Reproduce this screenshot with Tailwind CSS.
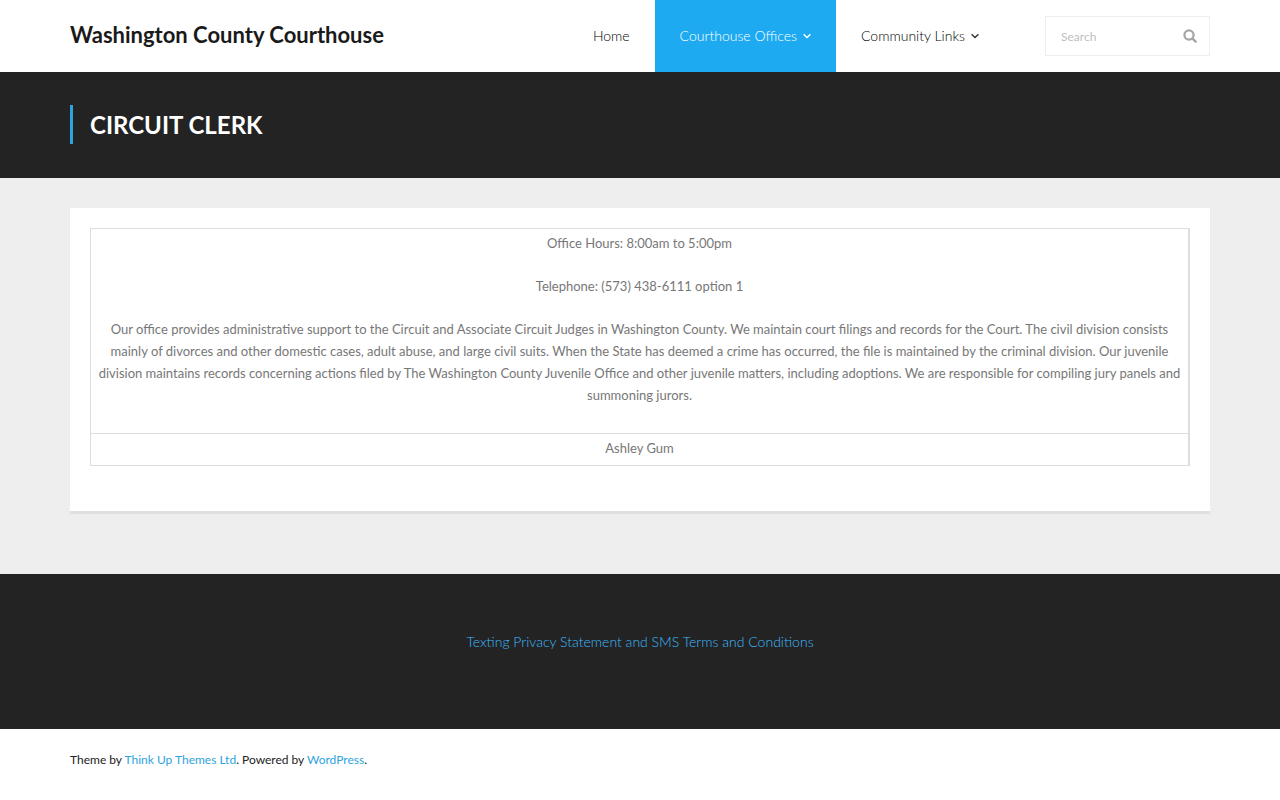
<!DOCTYPE html>
<html lang="en">
<head>
  <meta charset="UTF-8" />
  <meta name="viewport" content="width=device-width,initial-scale=1.0" />
  <title>Circuit Clerk – Washington County Courthouse</title>
  <script src="https://cdn.jsdelivr.net/npm/@tailwindcss/browser@4"></script>
</head>

<body class="bg-white font-['Lato','Liberation_Sans',sans-serif] text-[13px] leading-[22px] text-[#777]">

  <!-- HEADER -->
  <header>
    <div class="max-w-[1140px] mx-auto h-[72px] flex items-center justify-between">
      <a href="/" class="text-[22px] leading-[28px] font-bold text-[#1a1a1a] pb-[2px]">Washington County Courthouse</a>
      <div class="flex items-center h-full">
        <nav class="flex h-full text-sm font-light text-black">
          <a href="/" class="flex items-center px-[25px]">Home</a>
          <a href="#" class="flex items-center gap-[6px] px-[25px] bg-[#1eaaf1] text-white">
            Courthouse Offices
            <svg class="w-[8px] h-[6px]" viewBox="0 0 8 6" fill="none" stroke="currentColor" stroke-width="1.4"><path d="M0.6 1.2 4 4.6 7.4 1.2" /></svg>
          </a>
          <a href="#" class="flex items-center gap-[6px] px-[25px]">
            Community Links
            <svg class="w-[8px] h-[6px] text-[#333]" viewBox="0 0 8 6" fill="none" stroke="currentColor" stroke-width="1.4"><path d="M0.6 1.2 4 4.6 7.4 1.2" /></svg>
          </a>
        </nav>
        <form class="ml-[41px] w-[165px] h-10 flex items-center border border-[#eee] pl-[15px] pr-3">
          <input type="text" aria-label="Search" placeholder="Search" class="min-w-0 flex-1 pt-[2px] text-xs text-[#777] placeholder:text-[#c0c0c0] outline-none" />
          <button type="submit" aria-label="Submit search" class="text-[#a5a5a5]">
            <svg class="w-[14px] h-[14px]" viewBox="0 0 14 14" fill="none" stroke="currentColor"><circle cx="6" cy="6" r="4.6" stroke-width="2.2" /><path d="M9.4 9.4 12.6 12.6" stroke-width="2.4" stroke-linecap="round" /></svg>
          </button>
        </form>
      </div>
    </div>
  </header>

  <!-- PAGE TITLE -->
  <section class="bg-[#232323] pt-[33px] pb-[34px]">
    <div class="max-w-[1140px] mx-auto">
      <h1 class="border-l-3 border-[#2ea3dd] pl-[17px] text-2xl leading-[39px] font-bold text-white uppercase">Circuit Clerk</h1>
    </div>
  </section>

  <!-- CONTENT -->
  <main class="bg-[#eee] pt-[30px] pb-[60px]">
    <div class="max-w-[1140px] mx-auto bg-white border-b-3 border-[#dfdfdf] px-5 pt-5 pb-[45px]">
      <table class="w-full border-separate border-spacing-0 border-t border-x border-[#ddd] text-center">
        <tbody>
          <tr>
            <td class="border-r border-b border-[#ddd] px-[5px] pt-[3px] pb-[6px]">
              <p class="mb-[21px]">Office Hours: 8:00am to 5:00pm</p>
              <p class="mb-[21px]">Telephone: (573) 438-6111 option 1</p>
              <p class="mb-[21px]">Our office provides administrative support to the Circuit and Associate Circuit Judges in Washington County. We maintain court filings and records for the Court. The civil division consists mainly of divorces and other domestic cases, adult abuse, and large civil suits. When the State has deemed a crime has occurred, the file is maintained by the criminal division. Our juvenile division maintains records concerning actions filed by The Washington County Juvenile Office and other juvenile matters, including adoptions. We are responsible for compiling jury panels and summoning jurors.</p>
            </td>
          </tr>
          <tr>
            <td class="border-r border-b border-[#ddd] px-[5px] pt-[3px] pb-[6px]">Ashley Gum</td>
          </tr>
        </tbody>
      </table>
    </div>
  </main>

  <!-- FOOTER -->
  <footer>
    <div class="bg-[#232323] pt-[57px] pb-[76px] text-center text-sm leading-[22px] font-light">
      <a href="#" class="text-[#3dbaff]">Texting Privacy Statement and SMS Terms and Conditions</a>
    </div>
    <div class="max-w-[1140px] mx-auto py-5 text-xs leading-[22px] text-[#222]">
      Theme by <a href="#" class="text-[#2ea3dd]">Think Up Themes Ltd</a>. Powered by <a href="#" class="text-[#2ea3dd]">WordPress</a>.
    </div>
  </footer>

</body>
</html>
